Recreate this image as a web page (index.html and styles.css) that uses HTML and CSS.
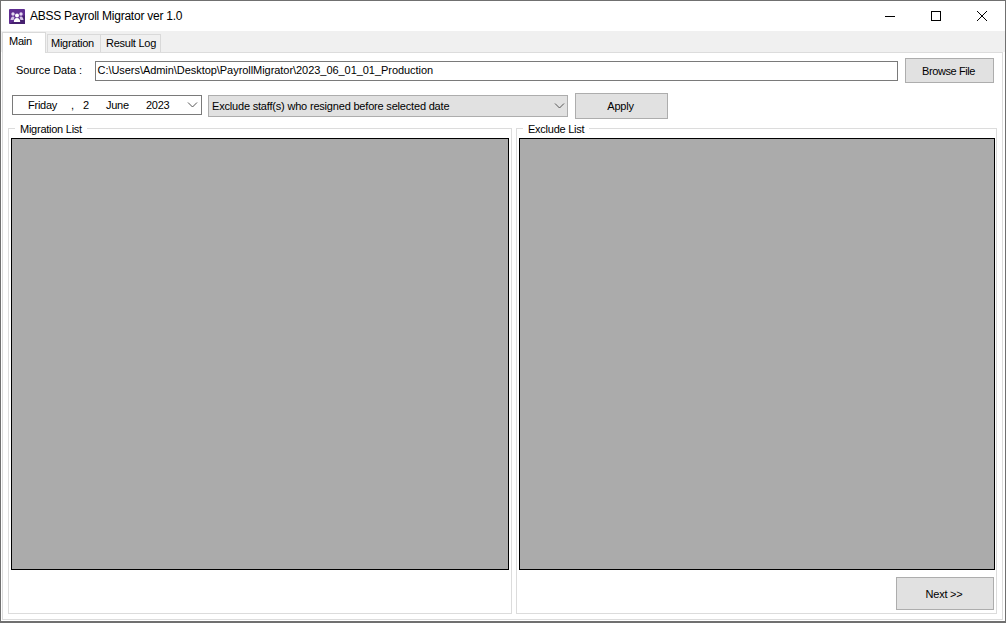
FILE: index.html
```html
<!DOCTYPE html>
<html lang="en">
<head>
<meta charset="utf-8">
<title>ABSS Payroll Migrator ver 1.0</title>
<link rel="stylesheet" href="styles.css">
</head>
<body>
<div class="window">
  <header class="titlebar">
    <svg class="app-icon" width="16" height="15" viewBox="0 0 16 15">
      <rect width="16" height="15" rx="1" fill="#5f2d91"/>
      <path d="M0 15 L16 6 V15 Z" fill="#46206f"/>
      <circle cx="4" cy="5" r="1.7" fill="#e4d8f0"/>
      <circle cx="12" cy="5" r="1.7" fill="#e4d8f0"/>
      <circle cx="8" cy="6.5" r="2" fill="#fff"/>
      <path d="M1.5 11 Q2 7.5 4 7.5 Q5 7.5 5.5 8.5 L4.5 11 Z M14.5 11 Q14 7.5 12 7.5 Q11 7.5 10.5 8.5 L11.5 11 Z" fill="#d5c5e6"/>
      <path d="M4.8 13 Q5 9 8 9 Q11 9 11.2 13 Z" fill="#fff"/>
    </svg>
    <span class="title">ABSS Payroll Migrator ver 1.0</span>
    <div class="controls">
      <svg class="ctl" width="46" height="30" viewBox="0 0 46 30"><path d="M18 15.5 H28" stroke="#000" fill="none"/></svg>
      <svg class="ctl" width="46" height="30" viewBox="0 0 46 30"><rect x="18.5" y="10.5" width="9" height="9" stroke="#000" fill="none"/></svg>
      <svg class="ctl" width="46" height="30" viewBox="0 0 46 30"><path d="M18 10 L28 20 M28 10 L18 20" stroke="#000" fill="none"/></svg>
    </div>
  </header>
  <nav class="tabstrip">
    <span class="tab active">Main</span>
    <span class="tab">Migration</span>
    <span class="tab">Result Log</span>
  </nav>
  <main class="panel">
    <div class="source-row">
      <label class="source-label">Source Data :</label>
      <div class="path-input">C:\Users\Admin\Desktop\PayrollMigrator\2023_06_01_01_Production</div>
      <button class="btn browse">Browse File</button>
    </div>
    <div class="filter-row">
      <div class="date-picker">
        <span class="d-day">Friday</span><span class="d-comma">,</span><span class="d-num">2</span><span class="d-month">June</span><span class="d-year">2023</span>
        <svg class="chev" width="11" height="6" viewBox="0 0 11 6"><path d="M1 0.5 L5.5 5 L10 0.5" stroke="#555" fill="none"/></svg>
      </div>
      <div class="combo">
        <span>Exclude staff(s) who resigned before selected date</span>
        <svg class="chev" width="11" height="6" viewBox="0 0 11 6"><path d="M1 0.5 L5.5 5 L10 0.5" stroke="#555" fill="none"/></svg>
      </div>
      <button class="btn apply">Apply</button>
    </div>
    <div class="groups">
      <fieldset class="group left">
        <legend>Migration List</legend>
        <div class="grid-area"></div>
      </fieldset>
      <fieldset class="group right">
        <legend>Exclude List</legend>
        <div class="grid-area"></div>
        <div class="actions"><button class="btn next">Next &gt;&gt;</button></div>
      </fieldset>
    </div>
  </main>
</div>
</body>
</html>
```
FILE: styles.css
```css
* { box-sizing: border-box; }
html, body { margin: 0; height: 100%; }
body {
  font-family: "Liberation Sans", Arial, sans-serif;
  font-size: 11px;
  letter-spacing: -0.25px;
  color: #000;
  background: #fff;
  overflow: hidden;
}
.window {
  width: 1006px;
  height: 623px;
  border: 1px solid #707070;
  border-bottom-width: 2px;
  background: #fff;
  display: flex;
  flex-direction: column;
}
.titlebar {
  height: 30px;
  flex: none;
  display: flex;
  align-items: center;
  padding-left: 8px;
}
.app-icon { flex: none; }
.title { margin-left: 5px; font-size: 12px; letter-spacing: -0.25px; }
.controls { margin-left: auto; display: flex; margin-right: 0; }
.ctl { display: block; }
.tabstrip {
  height: 21px;
  flex: none;
  background: #f0f0f0;
  display: flex;
  align-items: flex-end;
  padding-left: 1px;
}
.tab {
  height: 18px;
  padding: 0 5px;
  border: 1px solid #d9d9d9;
  border-bottom: 0;
  line-height: 17px;
  background: #f0f0f0;
  white-space: nowrap;
}
.tab:nth-child(2) { margin-left: 1px; width: 54px; padding: 0 3px; }
.tab:nth-child(3) { margin-left: -1px; width: 61px; }
.tab.active {
  height: 21px;
  width: 44px;
  padding-left: 6px;
  background: #fff;
  position: relative;
  z-index: 1;
  margin-bottom: -1px;
}
.panel {
  flex: 1;
  margin: 0 2px 1px 1px;
  border: 1px solid #dcdcdc;
  padding: 5px 5px 5px 4px;
  display: flex;
  flex-direction: column;
  min-height: 0;
}
.source-row {
  display: flex;
  align-items: center;
  height: 25px;
  flex: none;
}
.source-label {
  margin-left: 9px;
  width: 79px;
  flex: none;
  letter-spacing: -0.1px;
  padding-bottom: 2px;
}
.path-input {
  width: 803px;
  height: 20px;
  border: 1px solid #7a7a7a;
  padding-left: 1.5px;
  line-height: 17px;
  background: #fff;
  white-space: nowrap;
  letter-spacing: -0.05px;
}
.btn {
  font: inherit;
  letter-spacing: inherit;
  color: #000;
  background: #e1e1e1;
  border: 1px solid #adadad;
  padding: 0;
  flex: none;
}
.browse { width: 89px; height: 25px; margin-left: 7px; letter-spacing: -0.4px; padding-right: 2px; }
.filter-row {
  display: flex;
  align-items: center;
  height: 26px;
  margin-top: 10px;
  flex: none;
  padding-left: 5px;
}
.date-picker {
  width: 190px;
  height: 20px;
  border: 1px solid #7a7a7a;
  display: flex;
  align-items: center;
  margin-bottom: 2px;
  padding-right: 3px;
}
.d-day { margin-left: 15px; width: 43px; }
.d-comma { width: 12px; }
.d-num { width: 23px; }
.d-month { width: 40px; }
.d-year { width: 30px; }
.chev { flex: none; margin-left: auto; }
.combo {
  width: 360px;
  height: 22px;
  margin-left: 6px;
  border: 1px solid #adadad;
  background: #e1e1e1;
  display: flex;
  align-items: center;
  padding: 0 2px 0 3px;
  margin-bottom: 1px;
  letter-spacing: -0.19px;
}
.apply { width: 93px; height: 26px; margin-left: 7px; padding-right: 2px; }
.groups {
  flex: 1;
  min-height: 0;
  display: flex;
  margin-top: 3px;
  margin-left: 1px;
}
.group {
  margin: 0;
  min-width: 0;
  border: 1px solid #dcdcdc;
  padding: 3px 2px 0 2px;
  display: flex;
  flex-direction: column;
}
.group.left { width: 504px; }
.group.right { width: 481px; margin-left: 4px; padding-right: 1px; }
legend {
  padding: 0 5px;
  margin-left: 4px;
  line-height: 15px;
  height: 13px;
}
.grid-area {
  height: 432px;
  flex: none;
  background: #ababab;
  border: 1px solid #000;
}
.actions {
  display: flex;
  justify-content: flex-end;
  margin-top: 7px;
  padding-right: 1px;
}
.next { width: 98px; height: 33px; padding-right: 2px; }
```
